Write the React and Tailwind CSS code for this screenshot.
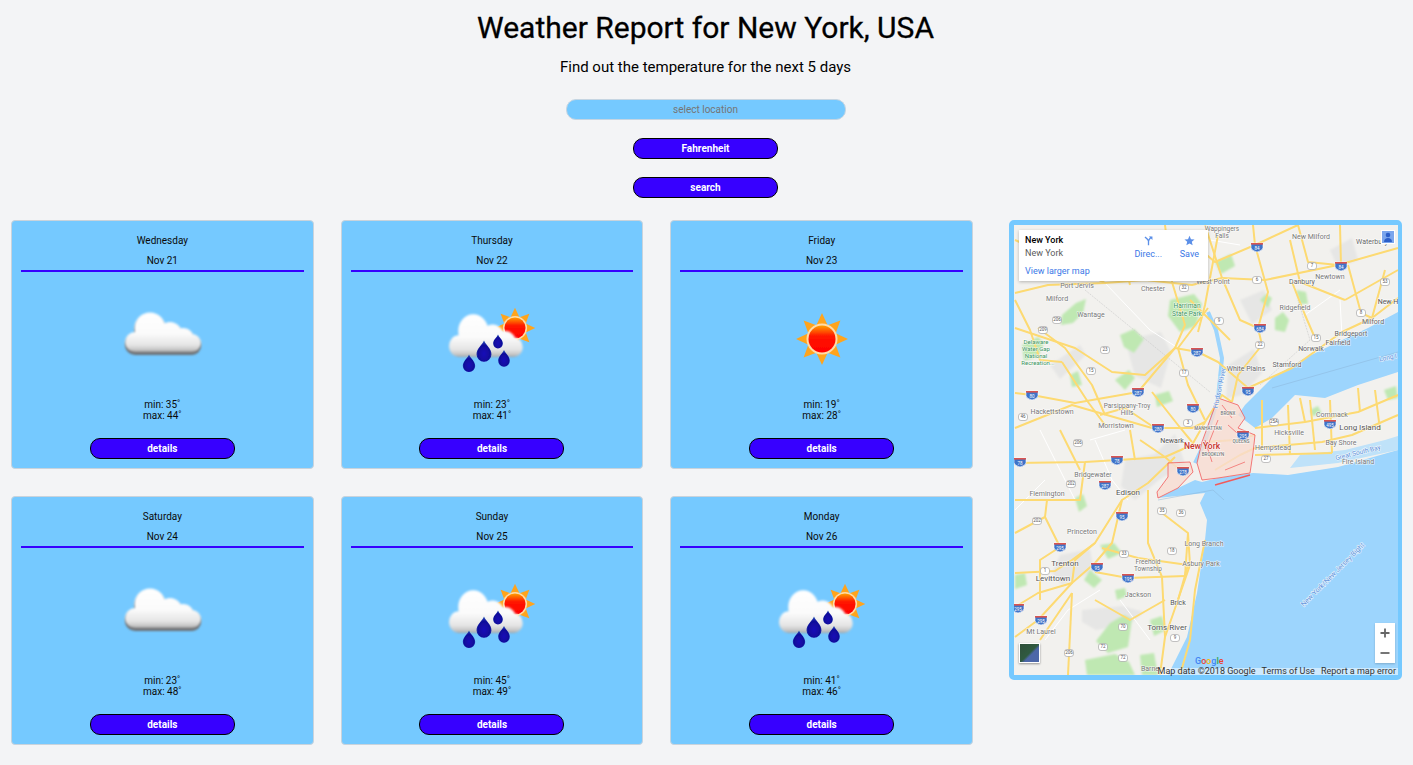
import React from 'react';

const days = [
  { day: 'Wednesday', date: 'Nov 21', min: 35, max: 44, icon: 'cloud' },
  { day: 'Thursday', date: 'Nov 22', min: 23, max: 41, icon: 'rain' },
  { day: 'Friday', date: 'Nov 23', min: 19, max: 28, icon: 'sun' },
  { day: 'Saturday', date: 'Nov 24', min: 23, max: 48, icon: 'cloud' },
  { day: 'Sunday', date: 'Nov 25', min: 45, max: 49, icon: 'rain' },
  { day: 'Monday', date: 'Nov 26', min: 41, max: 46, icon: 'rain' },
];

const Pill = ({ children, className = '' }) => (
  <button className={`flex h-[21px] w-[145px] items-center justify-center rounded-[10px] border border-black bg-[#3700ff] text-[10px] font-bold text-white ${className}`}>
    {children}
  </button>
);

const IconDefs = () => (
  <defs>
    <filter id="soft" x="-20%" y="-20%" width="140%" height="140%">
      <feGaussianBlur stdDeviation="0.7" />
    </filter>
    <filter id="cloudSoft" x="-20%" y="-20%" width="140%" height="140%">
      <feGaussianBlur stdDeviation="1.2" />
    </filter>
    <filter id="softer" x="-30%" y="-30%" width="160%" height="160%">
      <feGaussianBlur stdDeviation="1.3" />
    </filter>
    <linearGradient id="cloudFill" gradientUnits="userSpaceOnUse" x1="0" y1="20" x2="0" y2="63">
      <stop offset="0" stopColor="#ffffff" />
      <stop offset="0.55" stopColor="#fbfbfb" />
      <stop offset="0.82" stopColor="#e4e4e4" />
      <stop offset="0.93" stopColor="#c4c4c4" />
      <stop offset="1" stopColor="#8d8d8d" />
    </linearGradient>
    <linearGradient id="sunFill" x1="0" y1="0" x2="0" y2="1">
      <stop offset="0" stopColor="#ffa000" />
      <stop offset="0.4" stopColor="#ff1500" />
      <stop offset="1" stopColor="#ff0000" />
    </linearGradient>
    <radialGradient id="dropFill" cx="0.5" cy="0.62" r="0.55">
      <stop offset="0" stopColor="#1a10b8" />
      <stop offset="0.7" stopColor="#10089a" />
      <stop offset="1" stopColor="#1c3fb0" />
    </radialGradient>
  </defs>
);

const CloudShape = ({ fill, dy = 0 }) => (
  <g fill={fill} transform={`translate(0 ${dy})`}>
    <circle cx="23" cy="52" r="10" />
    <circle cx="38" cy="38" r="15.5" />
    <circle cx="58" cy="44" r="12" />
    <circle cx="71" cy="49" r="11" />
    <circle cx="80" cy="53" r="9" />
    <rect x="23" y="42" width="57" height="20" />
  </g>
);

const Sun = ({ cx, cy, s = 1 }) => {
  const rays = [0, 45, 90, 135, 180, 225, 270, 315];
  return (
    <g transform={`translate(${cx} ${cy}) scale(${s})`} filter="url(#soft)">
      {rays.map((r) => (
        <polygon key={r} points="-6,-13 0,-26 6,-13" fill="#ffa41f" transform={`rotate(${r})`} />
      ))}
      <circle r="15.5" fill="#ffdca8" />
      <circle r="13.5" fill="url(#sunFill)" />
    </g>
  );
};

const Drop = ({ x, y, s = 1 }) => (
  <path
    transform={`translate(${x} ${y}) scale(${s})`}
    d="M0 -10 C1.5 -6 6.5 -3 6.5 2 A6.5 6.5 0 0 1 -6.5 2 C-6.5 -3 -1.5 -6 0 -10 Z"
    fill="url(#dropFill)"
  />
);

const WeatherIcon = ({ type }) => (
  <svg viewBox="0 0 100 100" className="h-[100px] w-[100px]">
    <IconDefs />
    {type === 'cloud' && (
      <g>
        <g filter="url(#softer)"><CloudShape fill="#6f7276" dy={3} /></g>
        <g filter="url(#cloudSoft)"><CloudShape fill="url(#cloudFill)" /></g>
      </g>
    )}
    {type === 'sun' && <Sun cx={50} cy={49} />}
    {type === 'rain' && (
      <g>
        <Sun cx={73} cy={38} s={0.78} />
        <g transform="translate(-5.6 0) scale(0.97 1.08)" filter="url(#cloudSoft)">
          <CloudShape fill="url(#cloudFill)" />
        </g>
        <g filter="url(#soft)">
          <Drop x={27} y={74} s={0.95} />
          <Drop x={42} y={62} s={1.15} />
          <Drop x={56} y={52} s={0.75} />
          <Drop x={62} y={69} s={0.9} />
        </g>
      </g>
    )}
  </svg>
);

const DayCard = ({ day, date, min, max, icon }) => (
  <div className="flex h-[249px] flex-col items-center rounded border border-[#c9d3dc] bg-[#75c9ff] px-[9px] text-[10px] text-[#0a0a0a]">
    <div className="mt-[13px] leading-[13px]">{day}</div>
    <div className="mt-[7px] leading-[13px]">{date}</div>
    <div className="mt-[3px] h-[2px] w-full bg-[#3700ff]" />
    <div className="mt-[18px]"><WeatherIcon type={icon} /></div>
    <div className="mt-[9px] text-center leading-[11px]">
      <div>min: {min}˚</div>
      <div>max: {max}˚</div>
    </div>
    <Pill className="mt-[17px]">details</Pill>
  </div>
);

const green = [
  'M1062 315 l14 -12 l10 -4 l-3 14 l-10 10 l-12 2z', 'M1022 345 l16 -8 l6 6 l-6 14 l-14 4z', 'M1170 300 l24 -6 l8 10 l-6 22 l-16 6 l-12 -16z',
  'M1120 335 l14 -6 l10 10 l-10 14 l-10 -6z', 'M1215 262 l16 -8 l4 12 l-14 8z', 'M1275 318 l8 -6 l6 8 l-4 12 l-10 -2z', 'M1115 380 l14 -10 l6 8 l-10 12z',
  'M1155 395 l14 -4 l4 10 l-16 6z', 'M1070 375 l8 -4 l4 14 l-10 2z', 'M1296 290 l10 2 l2 12 l-8 0z', 'M1384 390 l12 -4 l2 12 l-10 2z', 'M1075 498 l8 -4 l4 12 l-8 6z',
  'M1015 575 l10 -2 l2 12 l-12 4z', 'M1100 545 l14 -2 l8 10 l-14 6z', 'M1090 570 l-6 10 l10 8 l8 -8z', 'M1115 590 l10 -2 l2 8 l-10 4z', 'M1110 623 l14 -8 l8 4 l-4 28 l-20 6 l-12 -12z',
  'M1150 620 l12 -4 l4 14 l-12 6z', 'M1085 660 l30 -6 l14 8 l6 13 l-48 0z', 'M1140 655 l14 -2 l4 22 l-16 0z', 'M1260 300 l6 -6 l6 4 l-4 10z', 'M1310 410 l8 -4 l4 8 l-10 2z',
];

const grey = [
  'M1125 340 l36 -8 l10 20 l-10 36 l-26 -12z', 'M1082 610 l40 -4 l22 6 l-14 12 l-34 6 l-14 -8z', 'M1050 365 l30 -20 l6 10 l-26 24z', 'M1125 460 l30 -6 l20 -20 l10 30 l-26 16 l-24 20 l-14 -14z',
  'M1240 300 l24 -10 l8 20 l-20 14z', 'M1060 555 l30 -6 l4 22 l-32 14 l-10 -12z', 'M1330 250 l22 -12 l6 22 l-20 8z', 'M1228 365 l26 -16 l8 24 l-20 22 l-16 4z',
];

const roads = [
  'M1015 293 L1048 285 L1105 283 L1145 280 L1192 285 L1222 278 L1265 280 L1338 265 L1398 248',
  'M1252 215 L1255 245 L1268 292 L1258 328 L1262 345 L1238 375 L1232 402',
  'M1015 393 L1032 395 L1075 403 L1138 392 L1175 348 L1198 352 L1218 362 L1248 388',
  'M1208 308 L1178 348 L1188 385 L1205 420',
  'M1038 328 L1065 348 L1092 385 L1105 415',
  'M1015 428 L1072 405 L1152 428 L1192 428 L1205 422',
  'M1015 463 L1085 462 L1118 460 L1165 457',
  'M1175 457 L1148 483 L1122 500 L1112 543 L1095 563 L1072 583 L1038 620 L1015 637',
  'M1015 607 L1038 593 L1072 583 L1075 560 L1095 543 L1122 500',
  'M1047 500 L1045 517 L1015 533',
  'M1015 573 L1055 571 L1072 560 L1095 543',
  'M1148 490 L1148 543 L1162 577 L1165 637 L1160 675',
  'M1095 572 L1128 578 L1185 576',
  'M1102 548 L1138 558 L1188 565',
  'M1162 513 L1188 533 L1190 565 L1172 617 L1165 637',
  'M1072 593 L1068 675',
  'M1255 428 L1305 422 L1358 412 L1398 395',
  'M1255 448 L1322 442 L1352 435 L1398 415',
  'M1255 455 L1332 453',
  'M1248 388 L1292 368 L1342 332 L1372 318 L1398 298',
  'M1292 282 L1305 315 L1315 338',
  'M1255 245 L1298 225',
  'M1298 225 L1308 262 L1338 265',
  'M1198 332 L1205 305 L1218 235',
  'M1172 282 L1185 325 L1175 348',
  'M1015 328 L1075 348 L1112 372 L1145 375 L1175 348',
  'M1062 362 L1088 402 L1105 425',
  'M1152 392 L1178 425 L1192 442',
  'M1205 225 L1222 278 L1240 320 L1258 328',
  'M1348 265 L1361 313 L1372 318',
  'M1305 422 L1300 398',
  'M1332 453 L1330 400',
  'M1290 455 L1288 405',
  'M1360 412 L1358 388',
  'M1045 517 L1060 547 L1040 560 L1040 600',
  'M1185 576 L1188 533',
  'M1100 415 L1125 408 L1155 428',
  'M1195 245 L1215 262 L1255 245',
  'M1015 240 L1060 260 L1105 283',
  'M1180 675 L1190 640 L1195 590 L1205 540',
  'M1262 400 L1262 450',
  'M1310 400 L1315 450',
  'M1375 390 L1380 430',
  'M1015 300 L1030 330 L1040 360 L1062 362',
  'M1120 240 L1130 285',
  'M1165 225 L1172 282',
  'M1190 300 L1230 340',
  'M1290 240 L1300 282 L1345 300',
  'M1345 300 L1398 270',
  'M1372 318 L1385 270',
  'M1340 225 L1341 266',
  'M1060 430 L1080 470',
  'M1085 462 L1080 500 L1047 500',
  'M1130 430 L1135 460',
  'M1015 500 L1047 500',
  'M1040 640 L1072 593',
  'M1095 600 L1130 620 L1165 600',
  'M1188 565 L1178 600',
  'M1165 457 L1192 445 L1205 422 L1222 395 L1232 402',
  'M1205 442 L1235 440 L1255 435',
  'M1215 470 L1240 455 L1255 448',
  'M1140 440 L1165 457 L1180 470',
];

const thin = [
  'M1105 283 L1150 330 L1178 348', 'M1040 430 L1060 470 L1075 500', 'M1128 500 L1112 480 L1095 440', 'M1305 315 L1340 290', 'M1240 245 L1210 240',
  'M1045 640 L1068 610 L1100 590', 'M1120 600 L1150 640', 'M1340 300 L1342 336', 'M1015 510 L1045 480', 'M1090 440 L1125 430',
];

const interstates = [
  [1257, 247, '84'], [1341, 266, '84'], [1260, 328, '684'], [1197, 352, '287'], [1138, 392, '287'], [1032, 395, '80'], [1248, 391, '95'], [1193, 408, '80'], [1158, 428, '280'],
  [1330, 424, '495'], [1243, 435, '295'], [1020, 462, '78'], [1117, 460, '78'], [1105, 485, '287'], [1060, 547, '295'], [1097, 567, '95'], [1122, 516, '95'], [1128, 578, '195'],
  [1041, 620, '295'], [1018, 608, '295'], [1183, 471, '278'],
];

const shields = [
  [1312, 266, '7'], [1257, 280, '6'], [1385, 282, '53'], [1219, 321, '9'], [1361, 313, '8'], [1316, 338, '15'], [1260, 345, '22'], [1184, 373, '17'], [1105, 350, '23'], [1091, 371, '15'],
  [1057, 320, '206'], [1043, 330, '209'], [1188, 423, '3'], [1023, 417, '46'], [1078, 443, '206'], [1274, 422, '25A'], [1184, 288, '32'], [1071, 484, '202'], [1037, 521, '202'],
  [1162, 511, '35'], [1181, 513, '36'], [1172, 551, '18'], [1124, 554, '33'], [1045, 571, '1'], [1123, 627, '70'], [1175, 638, '9'], [1103, 647, '72'], [1123, 658, '72'], [1069, 653, '206'], [1266, 459, '27'],
];

// x, y, text, fill, size, weight, rotation
const labels = [
  [1077, 286, 'Port Jervis'], [1057, 299, 'Milford'], [1091, 315, 'Wantage'], [1153, 289, 'Chester'], [1213, 282, 'West Point'], [1302, 282, 'Danbury', '#666'], [1330, 277, 'Newtown'],
  [1295, 308, 'Ridgefield'], [1187, 306, 'Harriman', '#3a9460', 6.5], [1187, 314, 'State Park', '#3a9460', 6.5], [1373, 322, 'Milford', '#666'], [1351, 334, 'Bridgeport', '#666'], [1338, 343, 'Fairfield', '#666'],
  [1311, 349, 'Norwalk', '#666'], [1287, 365, 'Stamford', '#666'], [1246, 369, 'White Plains', '#666'], [1311, 237, 'New Milford'], [1372, 242, 'Waterbury', '#666'], [1388, 302, 'New H', '#555'],
  [1222, 229, 'Wappingers', '#777', 6.5], [1222, 236, 'Falls', '#777', 6.5], [1052, 412, 'Hackettstown'], [1127, 406, 'Parsippany-Troy', '#777', 6.5], [1127, 413, 'Hills', '#777', 6.5], [1116, 426, 'Morristown'], [1172, 441, 'Newark', '#555'],
  [1202, 447, 'New York', '#c5342f', 8.5, 500], [1208, 429, 'MANHATTAN', '#777', 4.5, 500], [1228, 414, 'BRONX', '#777', 4.5, 500], [1241, 442, 'QUEENS', '#777', 4.5, 500], [1213, 455, 'BROOKLYN', '#777', 4.5, 500],
  [1289, 433, 'Hicksville'], [1273, 448, 'Hempstead'], [1332, 415, 'Commack'], [1360, 428, 'Long Island', '#555', 8], [1341, 443, 'Bay Shore'], [1358, 462, 'Fire Island', '#777', 7],
  [1358, 453, 'Great South Bay', '#5b8fd9', 6.5, 400, -14], [1388, 358, 'Long I', '#5b8fd9', 6.5, 400, -12], [1036, 342, 'Delaware', '#3a9460', 6], [1036, 349, 'Water Gap', '#3a9460', 6], [1036, 356, 'National', '#3a9460', 6],
  [1038, 363, 'Recreation...', '#3a9460', 6], [1220, 388, 'Hudson River', '#5b8fd9', 7, 400, -78], [1093, 475, 'Bridgewater'], [1047, 494, 'Flemington'], [1128, 493, 'Edison', '#555', 8], [1082, 532, 'Princeton'],
  [1065, 564, 'Trenton', '#555', 8], [1053, 579, 'Levittown', '#555', 8], [1204, 544, 'Long Branch'], [1201, 564, 'Asbury Park'], [1148, 562, 'Freehold', '#777', 6.5], [1148, 569, 'Township', '#777', 6.5], [1138, 595, 'Jackson'],
  [1178, 603, 'Brick', '#555'], [1167, 628, 'Toms River', '#555', 8], [1041, 632, 'Mt Laurel'], [1333, 575, 'New York/New Jersey Bight', '#5b8fd9', 7, 400, -45], [1150, 669, 'Barne'],
];

const MapDrawing = () => (
  <svg viewBox="1014 225 384 450" className="block h-[450px] w-[384px]" style={{ fontFamily: 'Roboto, sans-serif' }}>
    <defs>
      <filter id="mapSoft"><feGaussianBlur stdDeviation="0.35" /></filter>
      <filter id="patchSoft"><feGaussianBlur stdDeviation="1" /></filter>
    </defs>
    <rect x="1014" y="225" width="384" height="450" fill="#f2f1ee" />
    <g filter="url(#patchSoft)">
      {grey.map((d, i) => <path key={i} d={d} fill="#e6e6e5" />)}
      {green.map((d, i) => <path key={i} d={d} fill="#bfe8b2" />)}
    </g>
    <g filter="url(#mapSoft)">
      <path d="M1168 675 L1187 637 L1197 593 L1205 540 L1207 520 L1200 503 L1205 493 L1158 498 L1178 488 L1195 480 L1202 482 L1218 478 L1253 473 L1288 475 L1338 467 L1398 450 L1398 675 Z" fill="#9dd5fd" />
      <path d="M1398 312 L1368 328 L1338 342 L1305 358 L1272 378 L1245 405 L1238 415 L1255 428 L1272 418 L1295 395 L1325 398 L1358 385 L1398 372 Z" fill="#9dd5fd" />
      <path d="M1208 312 L1216 330 L1222 358 L1218 398 L1205 442 L1195 463" fill="none" stroke="#9dd5fd" strokeWidth="4" />
      <path d="M1300 455 L1345 450 L1385 440 L1398 436 L1398 450 L1338 463 L1290 468 Z" fill="#bfe2f9" />
      <path d="M1085 290 L1210 392 M1260 385 L1310 340 L1298 300" stroke="#c9c9c9" strokeWidth="0.6" fill="none" strokeDasharray="2 1" />
      <path d="M1272 388 L1398 352 M1158 500 L1213 490 L1224 500" stroke="#8ab4d8" strokeWidth="0.5" fill="none" />
      {thin.map((d, i) => <path key={i} d={d} fill="none" stroke="#ffffff" strokeWidth="1" />)}
      {roads.map((d, i) => <path key={i} d={d} fill="none" stroke="#fdda72" strokeWidth="2" strokeLinejoin="round" />)}
      <path d="M1218 398 L1238 405 L1245 418 L1238 428 L1255 435 L1253 453 L1250 473 L1218 478 L1202 480 L1197 463 L1202 442 Z" fill="#f8dcd2" fillOpacity="0.8" stroke="#f25a5a" strokeWidth="0.8" />
      <path d="M1168 463 L1190 462 L1193 472 L1178 488 L1158 498 L1157 492 L1168 477 Z" fill="#f8dcd2" fillOpacity="0.8" stroke="#f25a5a" strokeWidth="0.8" />
      <path d="M1215 485 L1250 475" stroke="#f25a5a" strokeWidth="1.5" fill="none" />
      <path d="M1218 420 L1208 445 M1228 425 L1245 440 M1205 440 L1212 462 M1225 470 L1245 462 M1222 405 L1232 418" stroke="#f25a5a" strokeWidth="0.7" fill="none" />
    </g>
    {labels.map(([x, y, t, fill = '#777', size = 7, weight = 400, rot], i) => (
      <text
        key={i}
        x={x}
        y={y}
        textAnchor="middle"
        dominantBaseline="middle"
        fontSize={size}
        fontWeight={weight}
        fill={fill}
        stroke="#ffffff"
        strokeWidth="1.2"
        strokeOpacity="0.75"
        paintOrder="stroke"
        transform={rot ? `rotate(${rot} ${x} ${y})` : undefined}
      >
        {t}
      </text>
    ))}
    {interstates.map(([x, y, n], i) => (
      <g key={i}>
        <path d={`M${x - 6} ${y - 4} h12 v5 q-1 3 -6 4 q-5 -1 -6 -4 z`} fill="#3f73c8" stroke="#fff" strokeWidth="0.6" />
        <rect x={x - 6} y={y - 4} width="12" height="1.6" fill="#d9534f" />
        <text x={x} y={y + 2} textAnchor="middle" dominantBaseline="middle" fontSize="4.5" fill="#fff">{n}</text>
      </g>
    ))}
    {shields.map(([x, y, n], i) => (
      <g key={i}>
        <rect x={x - 4.5} y={y - 3.5} width="9" height="7" rx="2.5" fill="#fff" stroke="#9a9a9a" strokeWidth="0.6" />
        <text x={x} y={y + 0.3} textAnchor="middle" dominantBaseline="middle" fontSize="4.5" fill="#555">{n}</text>
      </g>
    ))}
  </svg>
);

const PlaceCard = () => (
  <div className="absolute left-[5px] top-[5px] flex h-[51px] w-[189px] justify-between bg-white pl-[6px] pr-[9px] shadow-[0_1px_3px_rgba(0,0,0,0.25)]">
    <div className="text-[9px] leading-[13px]">
      <div className="mt-[4px] font-medium text-black">New York</div>
      <div className="text-[#5b5b5b]">New York</div>
      <div className="mt-[5px] text-[#3b78e7]">View larger map</div>
    </div>
    <div className="flex gap-[18px] text-[9px] leading-[12px] text-[#3b78e7]">
      <div className="mt-[5px] flex w-[27px] flex-col items-center">
        <svg viewBox="0 0 14 14" className="h-[11px] w-[11px]" fill="none" stroke="#5b8fe8" strokeWidth="1.7">
          <path d="M7 13 V8 C7 6 5 4.5 2.5 2.5 M7 8 C7.5 5.5 9 4 10.5 2.5" />
          <path d="M7.5 2 H12 V6.5 Z" fill="#5b8fe8" stroke="none" />
        </svg>
        <span className="mt-[2px] whitespace-nowrap">Direc...</span>
      </div>
      <div className="mt-[5px] flex flex-col items-center">
        <svg viewBox="0 0 24 24" className="h-[11px] w-[11px]" fill="#5b8fe8">
          <path d="M12 1.5 L15.2 9 L23 9.6 L17 14.8 L18.9 22.5 L12 18.3 L5.1 22.5 L7 14.8 L1 9.6 L8.8 9 Z" />
        </svg>
        <span className="mt-[2px]">Save</span>
      </div>
    </div>
  </div>
);

const MapPanel = () => (
  <div className="relative h-[460px] w-[393px] rounded-[5px] border-[5px] border-r-[4px] border-[#75c9ff] bg-[#75c9ff]">
    <MapDrawing />
    <PlaceCard />
    <div className="absolute right-[3px] top-[5px] flex h-[14px] w-[14px] items-end justify-center border border-white bg-[#7ba6ed]">
      <svg viewBox="0 0 12 12" className="h-[12px] w-[12px]" fill="#2c5fc9">
        <circle cx="6" cy="4" r="2.3" />
        <path d="M2 11 C2 8 4 7 6 7 C8 7 10 8 10 11 Z" />
      </svg>
    </div>
    <div className="absolute bottom-[12px] right-[3px] flex h-[40px] w-[20px] flex-col items-center justify-around bg-white shadow-[0_1px_2px_rgba(0,0,0,0.2)]">
      <svg viewBox="0 0 10 10" className="h-[10px] w-[10px]" stroke="#666" strokeWidth="1.8"><path d="M5 0.5 V9.5 M0.5 5 H9.5" /></svg>
      <svg viewBox="0 0 10 10" className="h-[10px] w-[10px]" stroke="#666" strokeWidth="1.8"><path d="M0.5 5 H9.5" /></svg>
    </div>
    <div className="absolute bottom-[12px] left-[5px] h-[20px] w-[21px] border border-white bg-[linear-gradient(135deg,#2f4f3a_0%,#2f5a3f_50%,#4d67a8_60%,#4d67a8_100%)] shadow-[0_1px_2px_rgba(0,0,0,0.4)]" />
    <div className="absolute bottom-[9px] left-[181px] text-[9px] font-medium leading-[10px]">
      <span className="text-[#4285f4]">G</span><span className="text-[#ea4335]">o</span><span className="text-[#fbbc05]">o</span><span className="text-[#4285f4]">g</span><span className="text-[#34a853]">l</span><span className="text-[#ea4335]">e</span>
    </div>
    <div className="absolute bottom-0 right-0 flex h-[7px] w-[240px] items-center justify-end gap-[6px] whitespace-nowrap bg-white/50 pr-[2px] text-[9px] text-[#333]">
      <span>Map data ©2018 Google</span>
      <span>Terms of Use</span>
      <span>Report a map error</span>
    </div>
  </div>
);

const App = () => {
  return (
    <div className="min-h-screen bg-[#f3f4f6] font-['Roboto',sans-serif] text-black">
      <div className="flex flex-col items-center pr-[2px]">
        <h1 className="mt-[9px] text-[30px] font-normal leading-[38px] [-webkit-text-stroke:0.3px_black]">Weather Report for New York, USA</h1>
        <p className="mt-[11px] text-[15px] leading-[18px]">Find out the temperature for the next 5 days</p>
        <input
          placeholder="select location"
          className="mt-[23px] h-[21px] w-[280px] rounded-[10px] border border-[#c5d5e2] bg-[#75c9ff] text-center text-[10px] placeholder:text-[#757575]"
        />
        <Pill className="mt-[18px]">Fahrenheit</Pill>
        <Pill className="mt-[18px]">search</Pill>
      </div>
      <div className="mt-[22px] flex items-start pl-[11px]">
        <div className="grid w-[962px] grid-cols-3 gap-[27px]">
          {days.map((d) => <DayCard key={d.day} {...d} />)}
        </div>
        <div className="ml-[36px]"><MapPanel /></div>
      </div>
    </div>
  );
};

export default App;
